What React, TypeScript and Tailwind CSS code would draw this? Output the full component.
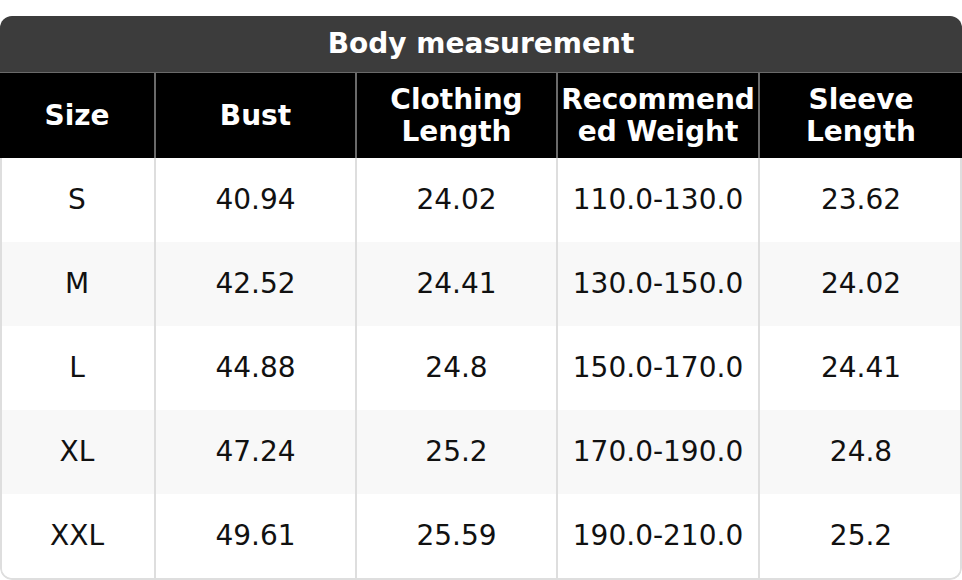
import React from 'react';

const headers = ['Size', 'Bust', 'Clothing Length', 'Recommend ed Weight', 'Sleeve Length'];

const rows: string[][] = [
  ['S', '40.94', '24.02', '110.0-130.0', '23.62'],
  ['M', '42.52', '24.41', '130.0-150.0', '24.02'],
  ['L', '44.88', '24.8', '150.0-170.0', '24.41'],
  ['XL', '47.24', '25.2', '170.0-190.0', '24.8'],
  ['XXL', '49.61', '25.59', '190.0-210.0', '25.2'],
];

const cols = 'grid grid-cols-[156px_201px_201px_202px_202px]';

export default function App() {
  return (
    <div className="w-[962px] h-[580px] bg-white pt-4 font-['DejaVu_Sans',sans-serif]">
      <div className="rounded-[12px] overflow-hidden">
        <div className="h-[57px] bg-[#3c3c3c] border-b border-[#6a6a6a] flex items-center justify-center text-white font-bold text-[28px] leading-none">
          Body measurement
        </div>
        <div className={`${cols} h-[85px] bg-black`}>
          {headers.map((h, i) => (
            <div
              key={h}
              className={`flex items-center justify-center text-center text-white font-bold text-[28px] leading-[32px] px-1 ${
                i < headers.length - 1 ? 'border-r-2 border-[#6a6a6a]' : ''
              }`}
            >
              {h}
            </div>
          ))}
        </div>
        <div className="border-x-2 border-b-2 border-[#dedede] rounded-b-[12px] overflow-hidden">
          {rows.map((r, ri) => (
            <div
              key={r[0]}
              className={`${cols} -mx-[2px] h-[84px] ${ri % 2 === 1 ? 'bg-[#f8f8f8]' : 'bg-white'} ${ri === rows.length - 1 ? 'h-[82px]' : ''}`}
            >
              {r.map((c, ci) => (
                <div
                  key={ci}
                  className={`flex items-center justify-center text-[28px] text-[#111] ${
                    ci < r.length - 1 ? 'border-r-2 border-[#dedede]' : ''
                  }`}
                >
                  {c}
                </div>
              ))}
            </div>
          ))}
        </div>
      </div>
    </div>
  );
}
